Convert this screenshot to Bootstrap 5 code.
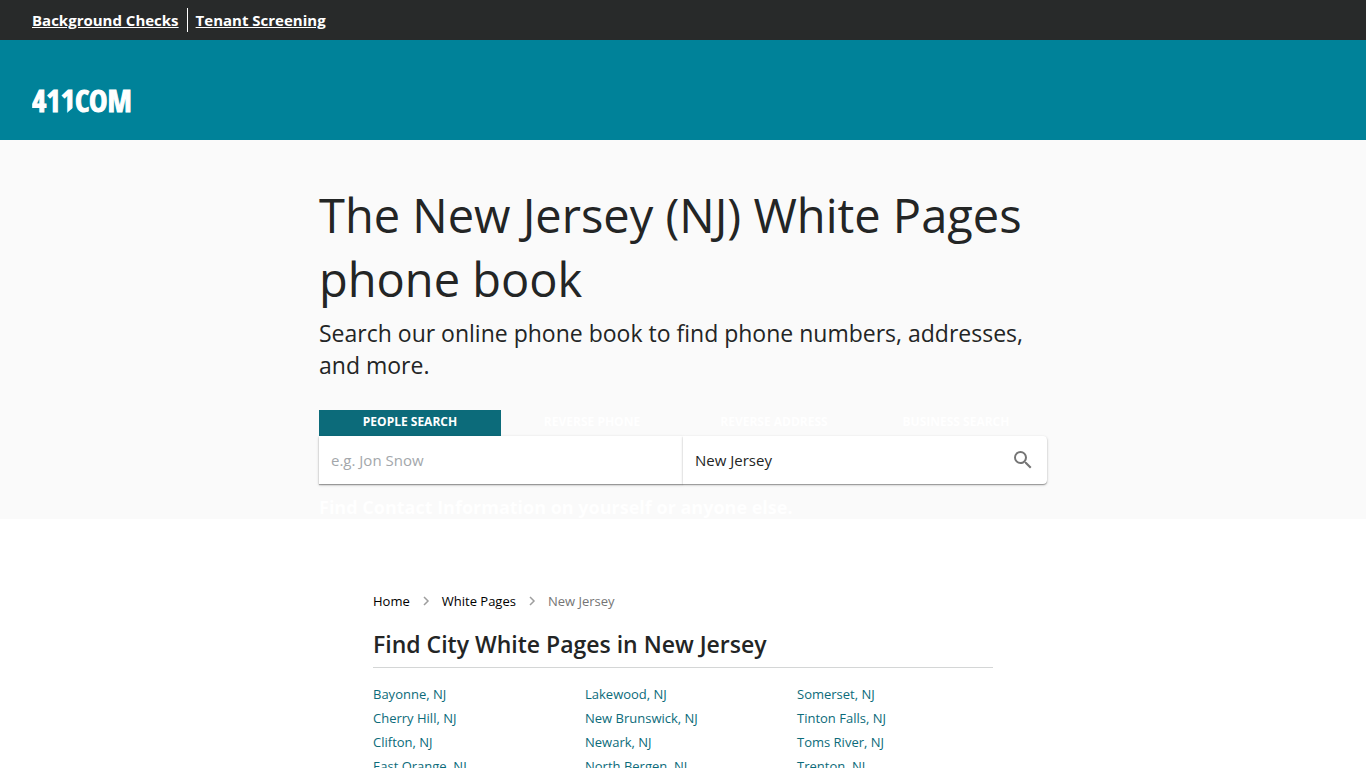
<!DOCTYPE html>
<html lang="en">
<head>
<meta charset="utf-8">
<meta name="viewport" content="width=device-width, initial-scale=1">
<title>New Jersey White Pages | 411.com</title>
<link href="https://cdn.jsdelivr.net/npm/bootstrap@5.3.0/dist/css/bootstrap.min.css" rel="stylesheet">
<style>
  body { font-family: "Open Sans", "Noto Sans", sans-serif; color: #232525; }
  .top-strip { background: #282a2a; min-height: 40px; }
  .top-strip a { color: #fff; font-size: 15px; line-height: 24px; font-weight: 700; }
  .top-strip li + li { border-left: 1px solid #fff; }
  .brand-bar { background: #008299; min-height: 100px; padding-top: 20px; }
  .hero { background: #fafafa; padding-top: 43px; }
  .hero-inner { max-width: 728px; }
  .hero h1 { font-size: 47px; line-height: 64px; font-weight: 400; margin-bottom: 6px; }
  .hero .intro { font-size: 23px; line-height: 32px; }
  .search-form { padding-top: 29px; }
  .search-tabs .nav-link { font-size: 12px; line-height: 16px; font-weight: 700; color: #fff; padding: 4px 0 6px; border-radius: 0; }
  .search-tabs .nav-link.active { background: #0c6b7a; color: #fff; }
  .search-cell { background: #fff; height: 48px; box-shadow: 0 1px 3px rgba(0,0,0,.2), 0 1px 1px rgba(0,0,0,.3); }
  .search-cell:last-child { border-radius: 0 4px 4px 0; }
  .search-cell .form-control { font-size: 15px; line-height: 24px; color: #232525; background: transparent; }
  .search-cell .form-control::placeholder { color: #a3a7ab; }
  .tagline { font-size: 18px; line-height: 24px; font-weight: 700; color: #fff; padding-top: 11px; }
  .listing { max-width: 620px; margin-top: 72px; }
  .listing a { text-decoration: none; }
  .crumbs { font-size: 13px; line-height: 20px; color: #757575; }
  .crumbs a { color: #000; }
  .listing h2 { font-size: 23px; line-height: 32px; font-weight: 600; margin-top: 17px; padding-bottom: 7px; border-bottom: 1px solid #d4d6d6; }
  .city-grid { display: grid; grid-template-columns: repeat(3, 1fr); column-gap: 16px; margin-top: 14px; font-size: 13px; line-height: 24px; }
  .city-grid a { color: #0c6b7a; }
</style>
</head>
<body>
<nav class="top-strip d-flex align-items-center px-4" aria-label="Services">
  <ul class="list-unstyled d-flex mb-0">
    <li class="px-2"><a class="d-block" href="#">Background Checks</a></li>
    <li class="px-2"><a class="d-block" href="#">Tenant Screening</a></li>
  </ul>
</nav>
<header class="brand-bar d-flex align-items-center px-4">
  <a class="ms-2 d-block" href="#" aria-label="411.com home">
    <svg class="d-block" width="104" height="44" viewBox="0 0 104 44">
      <text x="0" y="34" fill="#fff" stroke="#fff" stroke-width="1" font-family="'Open Sans Condensed', 'Liberation Sans Narrow', sans-serif" font-weight="700" font-size="31">411COM</text>
      <path d="M36 36V34L42 29V36Z" fill="#008299"/>
    </svg>
  </a>
</header>
<main>
  <section class="hero px-3 px-md-0">
    <div class="hero-inner mx-auto">
      <h1>The New Jersey (NJ) White Pages phone book</h1>
      <p class="intro mb-0">Search our online phone book to find phone numbers, addresses, and more.</p>
      <form class="search-form" onsubmit="return false">
        <div class="search-tabs nav nav-fill nav-justified" role="tablist">
          <button type="button" role="tab" class="nav-link border-0 active" aria-selected="true">PEOPLE SEARCH</button>
          <button type="button" role="tab" class="nav-link border-0 bg-transparent" aria-selected="false">REVERSE PHONE</button>
          <button type="button" role="tab" class="nav-link border-0 bg-transparent" aria-selected="false">REVERSE ADDRESS</button>
          <button type="button" role="tab" class="nav-link border-0 bg-transparent" aria-selected="false">BUSINESS SEARCH</button>
        </div>
        <div class="row g-0">
          <div class="search-cell col-6 d-flex align-items-center">
            <label class="visually-hidden" for="who">Name</label>
            <input id="who" class="form-control h-100 py-0 border-0 shadow-none" type="text" placeholder="e.g. Jon Snow">
          </div>
          <div class="search-cell col-6 d-flex align-items-center">
            <label class="visually-hidden" for="where">Location</label>
            <input id="where" class="form-control h-100 py-0 border-0 shadow-none" type="text" value="New Jersey">
            <button type="submit" class="btn border-0 p-0 me-2 px-1" aria-label="Search">
              <svg class="d-block" width="24" height="24" viewBox="0 0 24 24" fill="#757575"><path d="M15.500 14h-.79l-.28-.27A6.471 6.471 0 0 0 16 9.500 6.500 6.500 0 1 0 9.500 16c1.610 0 3.090-.59 4.230-1.570l.27.28v.79l5 4.990L20.490 19l-4.990-5zm-6 0C7.010 14 5 11.990 5 9.500S7.010 5 9.500 5 14 7.010 14 9.500 11.990 14 9.500 14z"/></svg>
            </button>
          </div>
        </div>
        <p class="tagline mb-0">Find Contact Information on yourself or anyone else.</p>
      </form>
    </div>
  </section>
  <section class="listing mx-auto px-3 px-md-0">
    <nav class="crumbs d-flex align-items-center gap-2" aria-label="Breadcrumb">
      <a href="#">Home</a>
      <svg width="16" height="16" viewBox="0 0 16 16" fill="none" stroke="#9e9e9e" stroke-width="1.500"><path d="M6 4l4 4-4 4"/></svg>
      <a href="#">White Pages</a>
      <svg width="16" height="16" viewBox="0 0 16 16" fill="none" stroke="#9e9e9e" stroke-width="1.500"><path d="M6 4l4 4-4 4"/></svg>
      <span aria-current="page">New Jersey</span>
    </nav>
    <h2 class="mb-0">Find City White Pages in New Jersey</h2>
    <div class="city-grid">
      <a href="#">Bayonne, NJ</a><a href="#">Lakewood, NJ</a><a href="#">Somerset, NJ</a>
      <a href="#">Cherry Hill, NJ</a><a href="#">New Brunswick, NJ</a><a href="#">Tinton Falls, NJ</a>
      <a href="#">Clifton, NJ</a><a href="#">Newark, NJ</a><a href="#">Toms River, NJ</a>
      <a href="#">East Orange, NJ</a><a href="#">North Bergen, NJ</a><a href="#">Trenton, NJ</a>
    </div>
  </section>
</main>
<script src="https://cdn.jsdelivr.net/npm/bootstrap@5.3.0/dist/js/bootstrap.bundle.min.js"></script>
</body>
</html>
